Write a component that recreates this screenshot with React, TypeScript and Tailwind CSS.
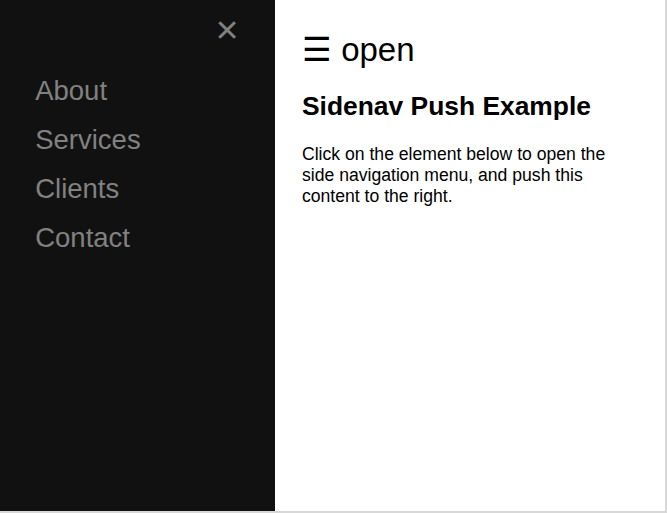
import React from "react";

export default function App() {
  const links = ["About", "Services", "Clients", "Contact"];
  return (
    <div className="w-[667px] h-[513px] bg-[#d8d8d8] overflow-hidden font-['Liberation_Sans',Arial,sans-serif]">
      <div className="w-[665px] h-[511px] bg-white flex">
        <nav className="relative w-[275px] shrink-0 h-full bg-[#111111] pt-[66px]">
          <a
            href="#"
            className="absolute top-[-2px] right-[27.5px] block py-[8.8px] pr-[8.8px] pl-[35.2px] text-[39.6px] leading-[1.15] text-[#818181] no-underline"
          >
            ×
          </a>
          {links.map((l) => (
            <a
              key={l}
              href="#"
              className="block py-[8.8px] pr-[8.8px] pl-[35.2px] text-[27.5px] leading-[1.15] text-[#818181] no-underline"
            >
              {l}
            </a>
          ))}
        </nav>
        <main className="flex-1 pt-[31px] pl-[27px] pr-[26px] text-black">
          <span className="block text-[33px] leading-[38px] cursor-pointer">
            ☰ open
          </span>
          <h2 className="mt-[22px] text-[26.4px] leading-[30px] font-bold">
            Sidenav Push Example
          </h2>
          <p className="mt-[23px] text-[17.6px] leading-[21px]">
            Click on the element below to open the side navigation menu, and
            push this content to the right.
          </p>
        </main>
      </div>
    </div>
  );
}
